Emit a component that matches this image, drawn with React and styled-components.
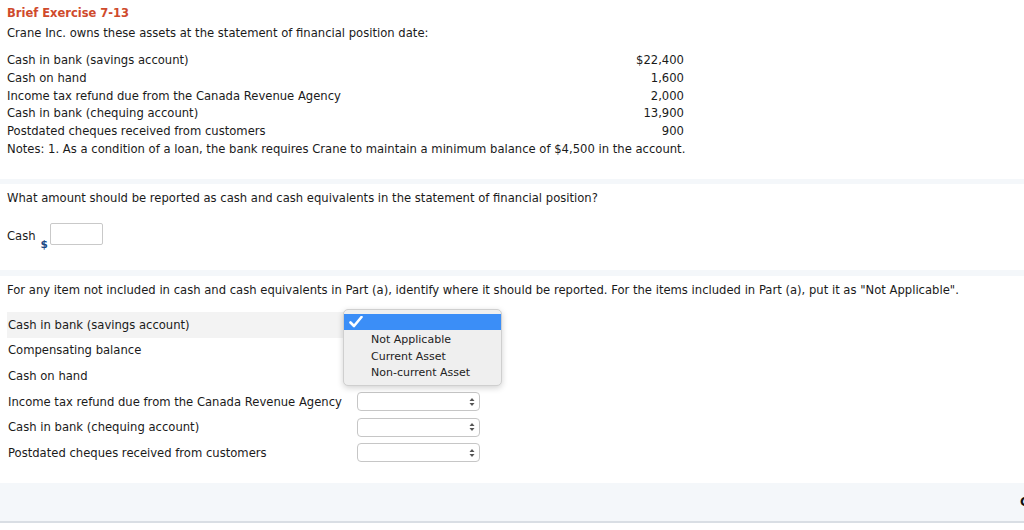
import React from 'react'
import styled, { createGlobalStyle } from 'styled-components'

const GlobalStyle = createGlobalStyle`
  html, body { margin: 0; padding: 0; background: #fff; }
  body {
    font-family: "DejaVu Sans", Verdana, sans-serif;
    font-size: 11.6px;
    color: #1a1a1a;
    overflow: hidden;
  }
`

const Page = styled.div`
  width: 1024px;
  height: 530px;
  overflow: hidden;
`

const Section = styled.div`
  padding: 0 7px;
  height: ${({ h }) => h}px;
  box-sizing: border-box;
`

const Band = styled.div`
  height: ${({ h }) => h || 6}px;
  background: #f4f7fa;
`

const Title = styled.div`
  color: #cf4a2c;
  font-weight: bold;
  font-size: 11.5px;
  padding-top: 6px;
  line-height: 14px;
`

const Para = styled.div`
  margin-top: ${({ mt }) => mt || 0}px;
  line-height: 18px;
`

const Table = styled.div`
  margin-top: 10px;
  width: 677px;
`

const Line = styled.div`
  display: flex;
  justify-content: space-between;
  line-height: 17.8px;
  white-space: nowrap;
`

const Question = styled.div`
  padding-top: 6px;
  line-height: 16px;
  white-space: nowrap;
`

const CashRow = styled.div`
  display: flex;
  align-items: flex-start;
  margin-top: 23px;
`

const Dollar = styled.span`
  color: #1b4a86;
  font-weight: bold;
  margin: 9px 2px 0 5px;
  font-size: 10.5px;
`

const TextBox = styled.div`
  width: 51px;
  height: 20px;
  border: 1px solid #c9c9c9;
  border-radius: 2px;
  margin-top: -6px;
`

const Rows = styled.div`
  position: relative;
  margin-top: 14px;
`

const ItemRow = styled.div`
  display: flex;
  align-items: center;
  height: 25.6px;
  background: ${({ active }) => (active ? '#f3f3f3' : 'transparent')};
  width: 339px;
  padding-left: 1px;
  white-space: nowrap;
`

const Label = styled.div`
  width: 349px;
  flex: none;
`

const Select = styled.div`
  flex: none;
  width: 123px;
  height: 19px;
  border: 1px solid #c6c6c6;
  border-radius: 4px;
  display: flex;
  align-items: center;
  justify-content: flex-end;
  padding-right: 4px;
  box-sizing: border-box;
  background: #fff;
`

const Popup = styled.div`
  position: absolute;
  left: 336px;
  top: -3px;
  width: 159px;
  height: 77px;
  background: #efefef;
  border: 1px solid #cfcfcf;
  border-radius: 5px;
  box-shadow: 0 2px 6px rgba(0, 0, 0, 0.18);
  padding-top: 4px;
  box-sizing: border-box;
  font-size: 11px;
  color: #222;
`

const Option = styled.div`
  height: ${({ selected }) => (selected ? 16 : 16.7)}px;
  line-height: 16.7px;
  padding-left: 27px;
  background: ${({ selected }) => (selected ? '#3b8ef7' : 'transparent')};
  position: relative;
  margin-bottom: ${({ selected }) => (selected ? 2 : 0)}px;
`

const Check = styled.svg`
  position: absolute;
  left: 5px;
  top: 2px;
`

const Footer = styled.div`
  height: 38px;
  background: #f4f7fa;
  border-bottom: 2px solid #d9dee4;
  display: flex;
  justify-content: flex-end;
  align-items: center;
  overflow: hidden;
`

const CutText = styled.span`
  font-weight: bold;
  font-size: 12px;
  margin-right: -60px;
  width: 64px;
  color: #111;
`

const Arrows = () => (
  <svg width="6" height="10" viewBox="0 0 6 10">
    <path d="M3 1 L5.5 4 H0.5 Z" fill="#555" />
    <path d="M3 9 L5.5 6 H0.5 Z" fill="#555" />
  </svg>
)

const assets = [
  ['Cash in bank (savings account)', '$22,400'],
  ['Cash on hand', '1,600'],
  ['Income tax refund due from the Canada Revenue Agency', '2,000'],
  ['Cash in bank (chequing account)', '13,900'],
  ['Postdated cheques received from customers', '900'],
]

const items = [
  'Cash in bank (savings account)',
  'Compensating balance',
  'Cash on hand',
  'Income tax refund due from the Canada Revenue Agency',
  'Cash in bank (chequing account)',
  'Postdated cheques received from customers',
]

export default function App() {
  return (
    <Page>
      <GlobalStyle />
      <Section h={179}>
        <Title>Brief Exercise 7-13</Title>
        <Para mt={4}>Crane Inc. owns these assets at the statement of financial position date:</Para>
        <Table>
          {assets.map(([name, amt]) => (
            <Line key={name}>
              <span>{name}</span>
              <span>{amt}</span>
            </Line>
          ))}
          <Line>
            <span>Notes: 1. As a condition of a loan, the bank requires Crane to maintain a minimum balance of $4,500 in the account.</span>
          </Line>
        </Table>
      </Section>
      <Band h={5} />
      <Section h={86}>
        <Question>What amount should be reported as cash and cash equivalents in the statement of financial position?</Question>
        <CashRow>
          <span>Cash</span>
          <Dollar>$</Dollar>
          <TextBox />
        </CashRow>
      </Section>
      <Band h={6} />
      <Section h={207}>
        <Question>For any item not included in cash and cash equivalents in Part (a), identify where it should be reported. For the items included in Part (a), put it as "Not Applicable".</Question>
        <Rows>
          {items.map((it, i) => (
            <ItemRow key={it} active={i === 0}>
              <Label>{it}</Label>
              <Select>
                <Arrows />
              </Select>
            </ItemRow>
          ))}
          <Popup>
            <Option selected>
              <Check width="14" height="12" viewBox="0 0 14 12">
                <path d="M1.5 6.5 L5 10 L12.5 1" stroke="#fff" strokeWidth="2.6" fill="none" strokeLinecap="round" strokeLinejoin="round" />
              </Check>
            </Option>
            <Option>Not Applicable</Option>
            <Option>Current Asset</Option>
            <Option>Non-current Asset</Option>
          </Popup>
        </Rows>
      </Section>
      <Footer>
        <CutText>Check</CutText>
      </Footer>
    </Page>
  )
}
